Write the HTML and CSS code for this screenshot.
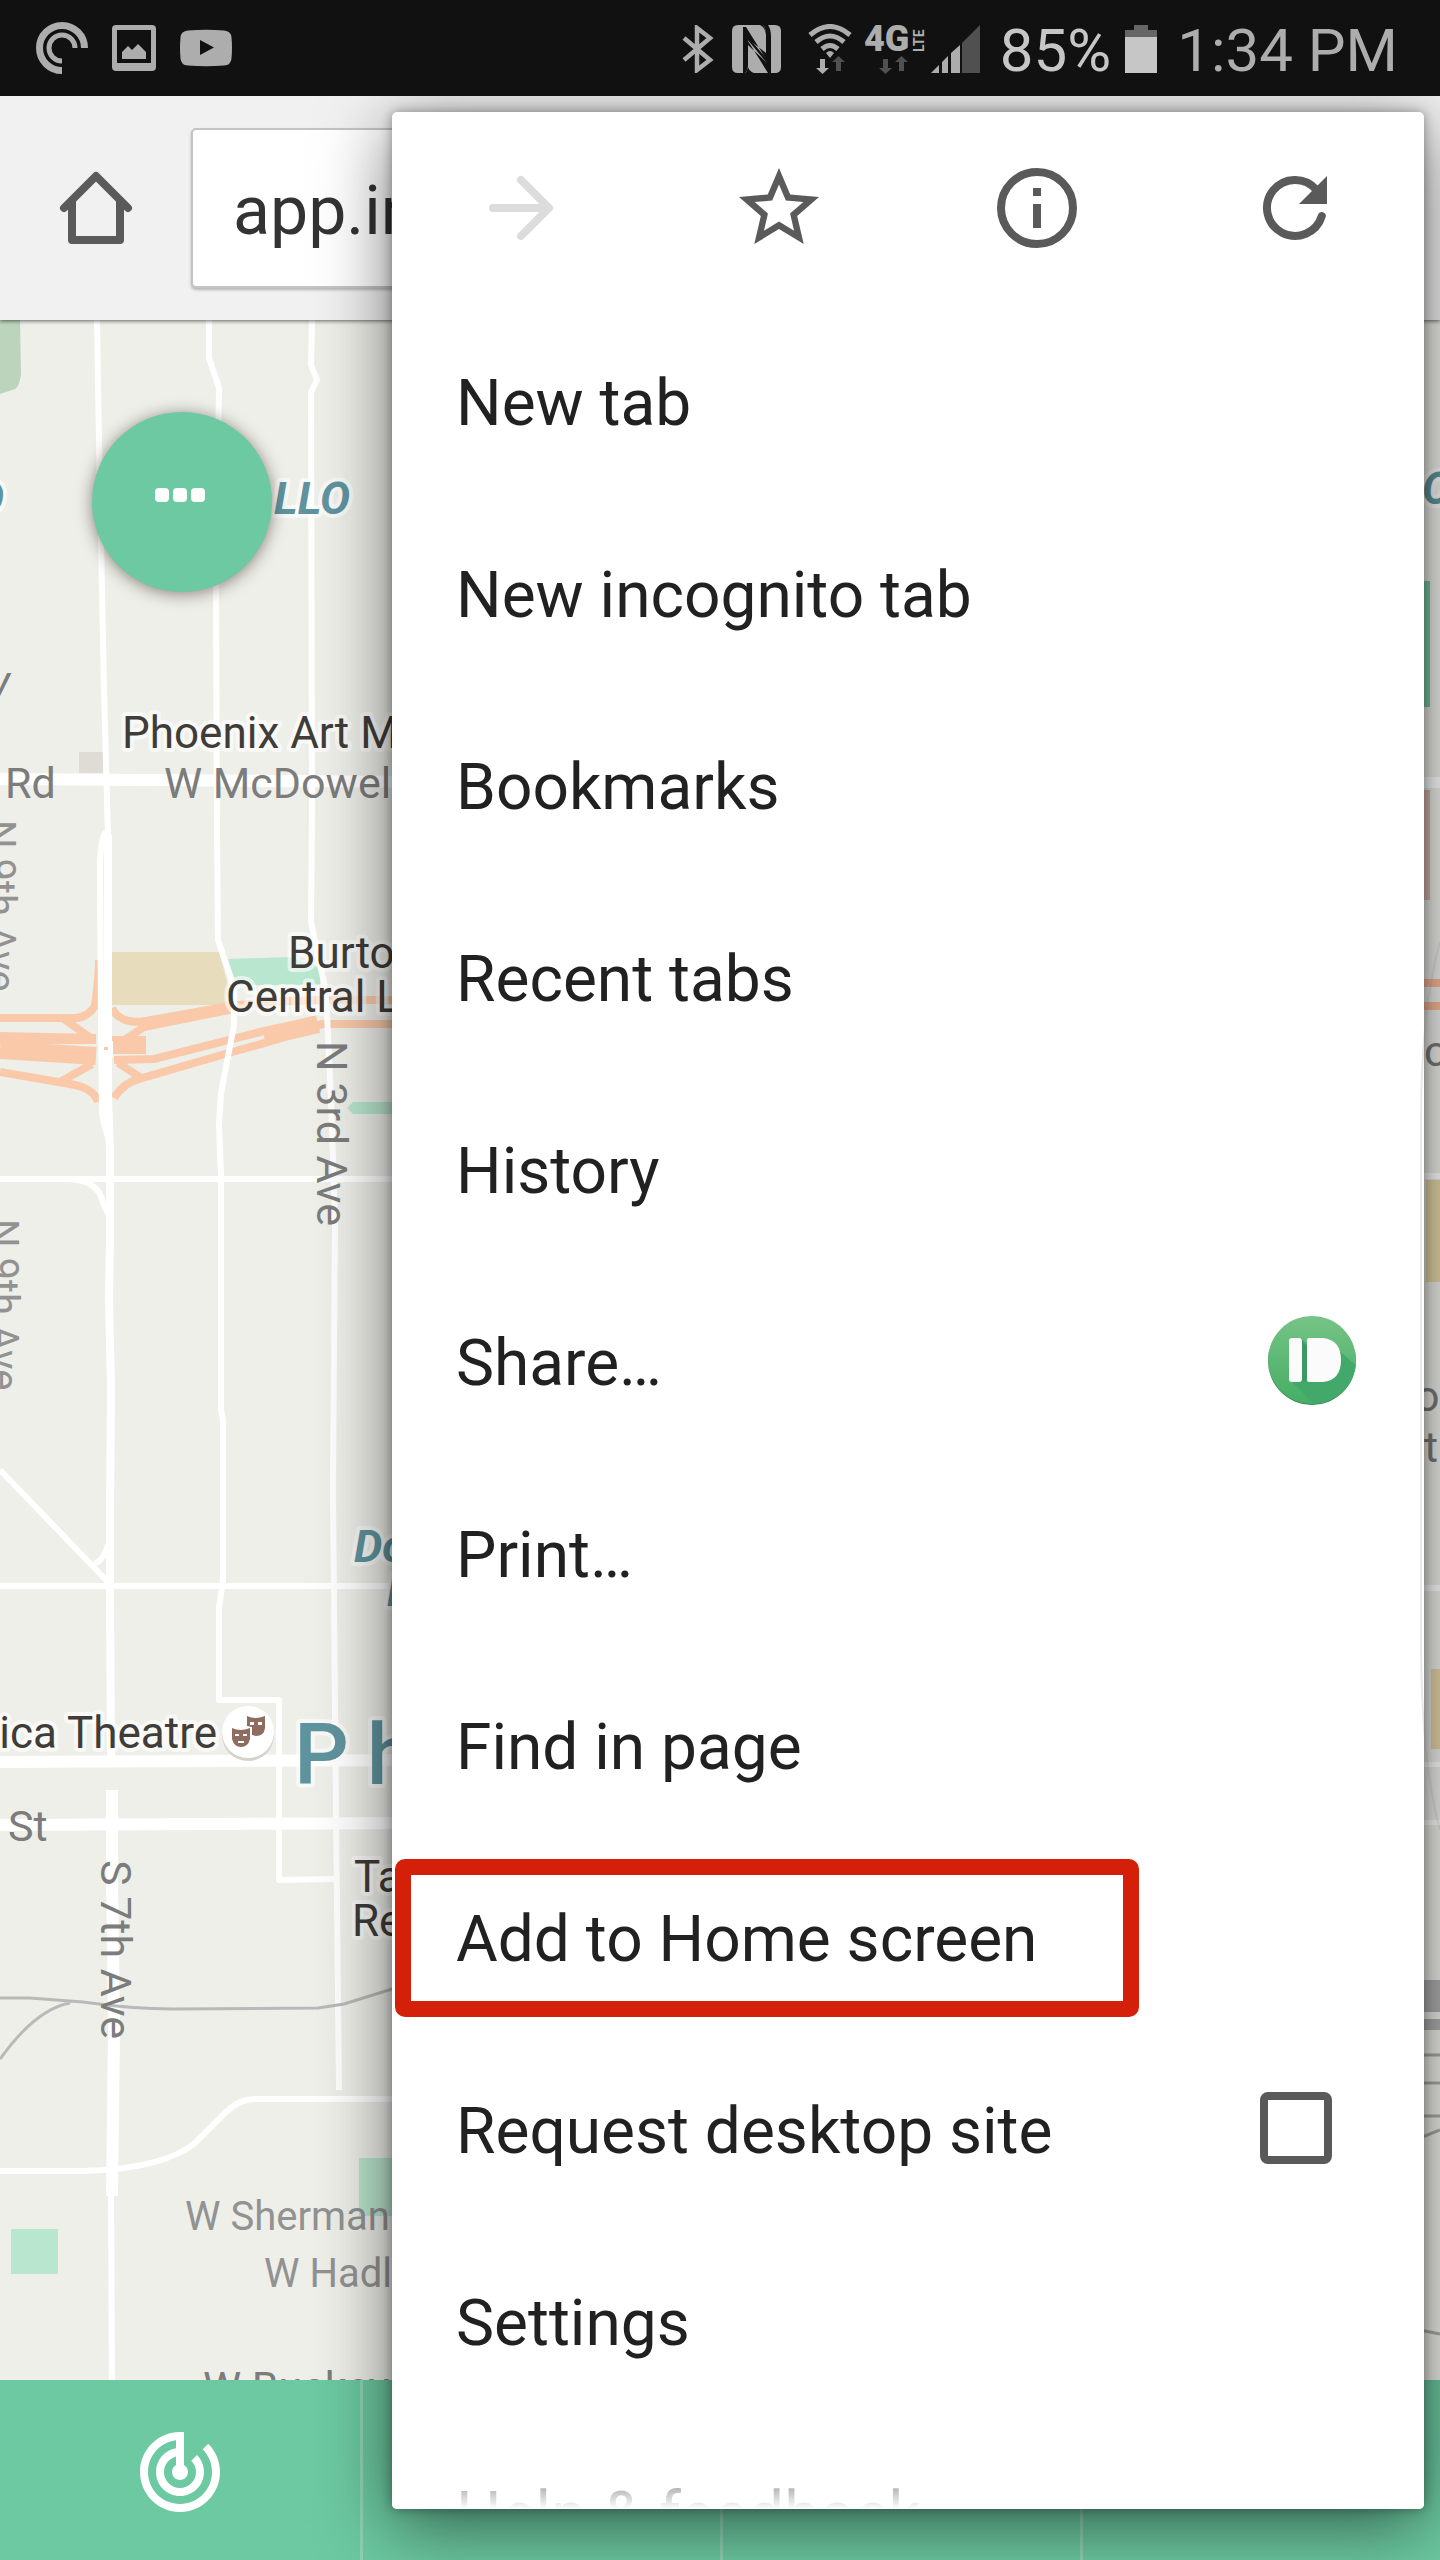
FILE: index.html
```html
<!DOCTYPE html>
<html lang="en">
<head>
<meta charset="utf-8">
<meta name="viewport" content="width=device-width, initial-scale=1">
<title>Map</title>
<link rel="stylesheet" href="styles.css">
</head>
<body>
<div class="screen">
  <header class="status">
    <div class="status-group status-left">
      <svg width="52" height="52" viewBox="0 0 52 52" fill="none" stroke="#adadad" aria-hidden="true"><path stroke-width="7" d="M48.500 26A22.500 22.500 0 1 0 26 48.500"/><path stroke-width="5" d="M39 26A13 13 0 1 0 26 39"/></svg>
      <svg width="44" height="52" viewBox="0 0 44 52" fill="#adadad" aria-hidden="true"><path fill-rule="evenodd" d="M4 3h36q4 0 4 4v38q0 4-4 4H4q-4 0-4-4V7q0-4 4-4zM5 8v33h34V8z"/><path d="M10 37v-7l6-6 4 4 6-6 8 8v7z"/></svg>
      <svg width="52" height="52" viewBox="0 0 52 52" aria-hidden="true"><path fill="#adadad" d="M8 8.500Q26 7 44 8.500q7 .5 7.500 7 1 10.500 0 21-.5 6.500-7.500 7-18 1.500-36 0-7-.5-7.500-7-1-10.500 0-21Q1 9 8 8.500z"/><path fill="#111" d="M20 18l14 7.500L20 33z"/></svg>
    </div>
    <div class="status-group status-right">
      <svg width="32" height="48" viewBox="0 0 32 48" fill="none" stroke="#adadad" stroke-width="4.500" aria-hidden="true"><path d="M2 13l26 22-13 10V3l13 10L2 35"/></svg>
      <svg class="nfc" width="49" height="48" viewBox="0 0 49 48" fill="#adadad" aria-hidden="true"><path d="M6 0h22q5 2 6 10v23L16 12v28q0 6-3 8H6q-6 0-6-6V6q0-6 6-6zM43 48H22q-6-2-7-10V14l19 23V10q0-6-3-10h12q6 0 6 6v36q0 6-6 6z"/><path fill="#111" d="M11 2l3 0 20 32v-6L16 14v26q0 5-3 8h-2zM36 0q3 4 3 12v36h-3l-20-32v4l18 17V10q0-7-3-10z"/></svg>
      <svg class="wifi" width="44" height="50" viewBox="0 0 44 50" aria-hidden="true"><g fill="none" stroke="#adadad" stroke-width="5"><path d="M2 11q20-17 40 0M8 18q14-12 28 0M14 25q8-7 16 0"/></g><path fill="#adadad" d="M18 29q4-4 8 0l-4 5z"/><path fill="#adadad" d="M12 35h5v9h4l-6.500 6L8 44h4z"/><path fill="#505050" d="M28 47h5v-9h4l-6.500-6-6.500 6h4z"/></svg>
      <svg width="62" height="50" viewBox="0 0 62 50" aria-hidden="true"><text class="net" x="0" y="27">4G</text><text class="lte" transform="translate(60 28) rotate(-90)">LTE</text><path fill="#505050" d="M19 35h5v9h4l-6.500 6-6.500-6h4zM35 47h5v-9h4l-6.500-6-6.500 6h4z"/></svg>
      <svg class="signal" width="49" height="48" viewBox="0 0 49 48" aria-hidden="true"><path fill="#adadad" d="M0 48l8-8v8zM11 48V37l6-6v17zM20 48V28l9-8v28z"/><path fill="#505050" d="M31 48V18L49 0v48z"/></svg>
      <span class="pct">85%</span>
      <svg class="battery" width="32" height="48" viewBox="0 0 32 48" aria-hidden="true"><path fill="#666" d="M9 0h14v5h9v7H0V5h9z"/><path fill="#c6c6c6" d="M0 12h32v36H0z"/></svg>
      <time>1:34 PM</time>
    </div>
  </header>

  <div class="toolbar">
    <button class="home" aria-label="Home"><svg width="96" height="96" viewBox="0 0 24 24" fill="none" stroke="#5a5a5a" stroke-width="2" stroke-linecap="round" stroke-linejoin="round"><path d="M4 12l8-8 8 8"/><path d="M6 10.500V20h12v-9.500"/></svg></button>
    <input class="omnibox" type="text" value="app.in" aria-label="Address">
  </div>

  <main class="map">
    <svg class="map-art" viewBox="0 320 1440 2060" preserveAspectRatio="xMinYMin slice" role="img" aria-label="Map of Phoenix">
      <path fill="#bcd4bc" d="M0 320h20l1 55q-2 12-6 14l-15 5z"/>
      <path fill="#dfdbd5" d="M79 752h24v21H79z"/>
      <path fill="#e7ddbc" d="M112 952h107l12 45-6 8H112z"/>
      <path fill="#b9e6ce" d="M228 959l60-2 32 10v18h-86zM347 1108l6-6h60v12h-60zM11 2229h47v45H11zM359 2158h60v58h-60z"/>
      <g fill="none" stroke="#f9c9aa" stroke-width="8">
        <path d="M0 1018h75q12 0 20-12 4-30 4-46M0 1072l70 12q24 4 28 18M64 1019l28 20M60 1082l32-18M114 1098q10-16 28-20l90-26q60-16 90-28h118M112 1008q6 14 28 14l90-16q80-10 210-4M120 1043l24-16 90-18M118 1063l22 14M114 1060l40-1 110-28"/>
        <path d="M0 1036l96 2M0 1040h96"/>
        <path stroke-width="18" d="M0 1050l96 6M110 1045h36M264 1036q30-6 54-12"/>
      </g>
      <g fill="none" stroke="#fff" stroke-width="6" stroke-linejoin="round">
        <path d="M97 320l2 120 5 250 4 145M106 832q-6 6-6 40l1 150 1 90q1 12 8 30"/>
        <path stroke-width="8" d="M108 835v265l2 50v90l-1 60 2 90-1 120v90l1 160"/>
        <path d="M209 320v38l10 30-3 202 1 240 1 110 16 47v38l-13 68-2 32 2 50v235l2 10v160l-4 28v92h60v180l55-1"/>
        <path d="M312 320l-1 45 6 15-6 12 1 420-1 110 15 70 5 108 4 120-2 270 2 220 1 100 3 280"/>
        <path d="M0 1179h440M65 1179q34 0 38 24l6 12M0 1470l108 112M94 1563q8 0 14-18M0 1586h440"/>
        <path stroke-width="12" d="M0 779l440 3M0 1762l440-2M0 1825l440-2M112 1790v90l2 150-2 166"/>
        <path d="M111 2190l1 200M0 2171h83q80-2 112-28l30-30q14-14 30-14h200"/>
      </g>
      <path fill="#fff" d="M99 1041h14v16H99z"/><path fill="#f9c9aa" d="M104 1047h4v3h-4z"/>
      <g fill="none" stroke="#b9b9b9" stroke-width="3"><path d="M0 1998h30l53 4q50 7 90 7l145-1 26-4 48-15h40M0 2059q36-50 70-56"/></g>

      <g>
        <path fill="#7fcba8" d="M1420 581h10v126h-10z"/><path fill="#dcb9b4" d="M1420 790h10v110h-10z"/>
        <path fill="#e5d6a8" d="M1426 1180h14v102h-14zM1431 1669h9v80h-9z"/>
        <path fill="#f9b998" d="M1420 979h20v8h-20zM1420 1002h20v8h-20z"/>
        <path fill="#fff" d="M1420 777h20v11h-20zM1420 1173h20v6h-20zM1420 1585h20v6h-20zM1420 1762h20v5h-20zM1420 1820h20v5h-20z"/>
        <path fill="#b0b0b0" d="M1420 1980h20v32h-20zM1420 2019h20v11h-20z"/>
        <path fill="none" stroke="#aaa" stroke-width="3" d="M1420 2055h20M1420 2083h20M1420 2116h20M1420 2138l20-8M1420 2330l20 4"/>
      </g>

      <g class="road-label">
        <text x="5" y="798">Rd</text><text x="164" y="798">W McDowell Rd</text><text x="8" y="1841">St</text><text x="203" y="2402">W Buckeye Rd</text>
        <text transform="translate(317 1041) rotate(90)">N 3rd Ave</text><text transform="translate(101 1860) rotate(90)">S 7th Ave</text>
        <text x="10" y="696" text-anchor="end" font-style="italic">y</text>
        <text x="1424" y="1066">c</text><text x="1424" y="1462">t</text><text x="1415" y="1411">or</text>
      </g>
      <g class="road-label minor">
        <text x="185" y="2230">W Sherman St</text><text x="264" y="2287">W Hadley St</text>
        <text transform="translate(-13 820) rotate(90)">N 9th Ave</text><text transform="translate(-10 1219) rotate(90)">N 9th Ave</text>
      </g>
      <g class="place-label">
        <text x="122" y="748">Phoenix Art Museum</text><text x="288" y="968">Burton Barr</text><text x="226" y="1012">Central Library</text>
        <text x="217" y="1748" text-anchor="end">ica Theatre</text><text x="354" y="1892">Talking</text><text x="352" y="1936">Resource</text>
      </g>
      <g class="area-label">
        <text x="350" y="514" text-anchor="end">LLO</text><text x="4" y="514" text-anchor="end">O</text><text x="1422" y="504">O</text>
        <text x="354" y="1562">Downtown</text><text x="387" y="1606">Phoenix</text>
      </g>
      <text class="city-label" y="1784"><tspan x="294">P</tspan><tspan x="367">h</tspan></text>
      <circle cx="248" cy="1735" r="26" fill="#d5d2ca"/><circle cx="248" cy="1732" r="26" fill="#fff"/>
      <path fill="#8f6c60" d="M247 1716q8 4 18 0v12q-1 8-9 8l-4-1v-8l-5-1zM232 1728q8 4 18 0v11q-2 8-9 8t-9-8z"/>
      <path fill="#fff" d="M250 1722h4v3h-4zM258 1722h4v3h-4zM235 1734h4v2h-4zM243 1734h4v2h-4zM238 1741h6v2h-6z"/>
    </svg>
    <button class="fab" aria-label="More"><i></i><i></i><i></i></button>
  </main>

  <nav class="tabs">
    <button class="tab" aria-label="Nearby"><svg width="96" height="96" viewBox="0 0 24 24" fill="#fff"><path d="M19.070 4.930l-1.410 1.410C19.100 7.790 20 9.790 20 12c0 4.420-3.580 8-8 8s-8-3.580-8-8c0-4.080 3.050-7.440 7-7.930v2.020C8.160 6.570 6 9.030 6 12c0 3.310 2.690 6 6 6s6-2.690 6-6c0-1.660-.67-3.160-1.760-4.240l-1.410 1.410C15.550 9.900 16 10.900 16 12c0 2.210-1.790 4-4 4s-4-1.790-4-4c0-1.860 1.280-3.410 3-3.860v2.140c-.6.35-1 .98-1 1.720 0 1.100.9 2 2 2s2-.9 2-2c0-.74-.4-1.380-1-1.720V2h-1C6.480 2 2 6.480 2 12s4.480 10 10 10 10-4.480 10-10c0-2.760-1.120-5.260-2.930-7.070z"/></svg></button>
    <button class="tab" aria-label="Second tab"></button>
    <button class="tab" aria-label="Third tab"></button>
    <button class="tab" aria-label="Fourth tab"></button>
  </nav>

  <div class="menu">
    <div class="menu-scroll">
      <div class="menu-icons">
        <button aria-label="Forward" disabled><svg width="96" height="96" viewBox="0 0 24 24" fill="none" stroke="#dcdcdc" stroke-width="2" stroke-linecap="round" stroke-linejoin="round"><path d="M5 12h14M12 5l7 7-7 7"/></svg></button>
        <button aria-label="Bookmark"><svg width="96" height="96" viewBox="0 0 24 24" fill="#5a5a5a"><path d="M22 9.240l-7.190-.62L12 2 9.190 8.630 2 9.240l5.460 4.730L5.820 21 12 17.270 18.180 21l-1.630-7.030zM12 15.400l-3.760 2.270 1-4.280-3.320-2.880 4.380-.38L12 6.100l1.710 4.040 4.380.38-3.320 2.880 1 4.280z"/></svg></button>
        <button aria-label="Page info"><svg width="96" height="96" viewBox="0 0 24 24"><circle cx="12" cy="12" r="9" fill="none" stroke="#5a5a5a" stroke-width="2"/><path fill="#5a5a5a" d="M11 7h2v2h-2zM11 11h2v6h-2z"/></svg></button>
        <button aria-label="Reload"><svg width="96" height="96" viewBox="0 0 24 24"><path d="M17.300 7.400A7 7 0 1 0 18.700 14" fill="none" stroke="#5a5a5a" stroke-width="2" stroke-linecap="round"/><path fill="#5a5a5a" d="M20 4v7h-7z"/></svg></button>
      </div>
      <button class="item"><span>New tab</span></button>
      <button class="item"><span>New incognito tab</span></button>
      <button class="item"><span>Bookmarks</span></button>
      <button class="item"><span>Recent tabs</span></button>
      <button class="item"><span>History</span></button>
      <button class="item item-share"><span>Share…</span>
        <svg width="88" height="92" viewBox="0 0 88 92" aria-hidden="true">
          <defs><linearGradient id="pb" x1="0" y1="0" x2="0" y2="1"><stop offset="0" stop-color="#76c385"/><stop offset="1" stop-color="#45ae65"/></linearGradient><clipPath id="pbc"><circle cx="44" cy="46" r="44"/></clipPath></defs>
          <circle cx="44" cy="47" r="44" fill="#3b8458"/><circle cx="44" cy="46" r="44" fill="url(#pb)"/>
          <g clip-path="url(#pbc)"><path fill="#43a96b" d="M33 24l8 8v-8h15l40 34v34H48L22 66z"/></g>
          <path fill="#3d9868" d="M33 27l6 5v35h-6z"/>
          <rect x="21" y="24" width="13" height="44" rx="3" fill="#fbfbfb"/><path fill="#fbfbfb" d="M41 24h14q18 2 18 22T55 68H41q-2 0-2-2V26q0-2 2-2z"/>
        </svg>
      </button>
      <button class="item"><span>Print…</span></button>
      <button class="item"><span>Find in page</span></button>
      <button class="item item-marked"><span>Add to Home screen</span></button>
      <label class="item item-check"><span>Request desktop site</span><input type="checkbox"></label>
      <button class="item"><span>Settings</span></button>
      <button class="item"><span>Help &amp; feedback</span></button>
    </div>
  </div>
  <svg class="edge-handle" width="20" height="900" viewBox="0 0 20 900" fill="none" stroke="#808090" stroke-opacity=".18" stroke-width="2" aria-hidden="true"><path d="M20 2Q1 70 1 180v520q0 120 19 190"/></svg>
</div>
</body>
</html>
```
FILE: styles.css
```css
*, *::before, *::after { box-sizing: border-box; }
body { margin: 0; font-family: Roboto, "Noto Sans", sans-serif; }
button { margin: 0; padding: 0; border: 0; background: none; font: inherit; color: inherit; }
svg { display: block; flex: none; }

.screen { position: relative; display: flex; flex-direction: column; min-height: 100vh; overflow: hidden; background: #eeefe9; }

/* status bar */
.status { position: relative; z-index: 3; display: flex; justify-content: space-between; height: 96px; padding: 0 42px 0 36px; background: #111; color: #c6c6c6; font-size: 60px; line-height: 72px; }
.status-group { display: flex; align-items: center; }
.status-left { gap: 24px; }
.status-right { color: #adadad; padding-top: 2px; }
.pct { margin: 4px 14px 0 20px; color: #c6c6c6; }
.status time { margin: 4px 0 0 20px; }
.nfc { margin-left: 18px; }
.wifi { margin: 0 12px 0 27px; }
.signal { margin-left: 5px; }
.net { font: 900 36px Roboto, sans-serif; fill: #adadad; }
.lte { font: 700 14px Roboto, sans-serif; fill: #adadad; }

/* browser toolbar */
.toolbar { position: relative; z-index: 1; display: flex; align-items: flex-start; height: 224px; padding: 32px 144px 0 0; background: #f1f1f1; box-shadow: 0 1px 4px rgba(0, 0, 0, .6); }
.home { padding: 32px 47px 32px 48px; }
.omnibox { flex: 1; min-width: 0; height: 160px; padding: 6px 40px 0; border: 2px solid #c4c4c4; border-radius: 5px; background: #fff; box-shadow: 0 2px 3px rgba(0, 0, 0, .25); color: #333; font: 68px Roboto, sans-serif; }

/* map */
.map { position: relative; flex: 1; overflow: hidden; }
.map-art { position: absolute; inset: 0; width: 100%; height: 100%; }
.map text { font-family: Roboto, sans-serif; paint-order: stroke; stroke: rgba(255, 255, 255, .6); stroke-width: 8px; stroke-linejoin: round; }
.map .road-label text { font-size: 43px; fill: #7c7c7c; stroke: none; }
.map .minor text { font-size: 40px; fill: #929292; }
.map .place-label text { font-size: 44px; fill: #403c38; }
.map .area-label text { font-size: 45px; font-style: italic; font-weight: 700; fill: #5f949e; }
.map .city-label { font-size: 86px; font-weight: 500; fill: #5f949e; }
.fab { position: absolute; top: 92px; left: 92px; display: flex; align-items: center; justify-content: center; gap: 4px; width: 180px; height: 180px; padding: 0 4px 14px 0; border-radius: 50%; background: #6cc9a1; box-shadow: 0 2px 16px rgba(40, 20, 20, .5); }
.fab i { width: 14px; height: 14px; border-radius: 4px; background: #fff; }

/* bottom tabs */
.tabs { display: grid; grid-template-columns: repeat(4, 1fr); height: 180px; background: #6cc9a1; }
.tab { display: flex; align-items: center; justify-content: center; padding-top: 4px; }
.tab + .tab { border-left: 3px solid #8ed2b5; }

/* overflow menu */
.menu { position: absolute; z-index: 2; top: 112px; right: 16px; bottom: 51px; left: 392px; border-radius: 5px; background: #fff; box-shadow: 0 0 12px rgba(0, 0, 0, .35), 0 16px 72px rgba(0, 0, 0, .55); }
.menu-scroll { position: relative; height: 100%; overflow: hidden; border-radius: 5px; }
.menu-scroll::after { content: ""; position: absolute; right: 0; bottom: 0; left: 0; height: 64px; background: linear-gradient(rgba(255, 255, 255, 0), #fff); }
.menu-icons { display: grid; grid-template-columns: repeat(4, 1fr); place-items: center; height: 192px; }
.item { position: relative; display: flex; align-items: center; justify-content: space-between; width: 100%; height: 192px; padding: 0 92px 0 64px; color: #212121; font-size: 64px; line-height: 76px; text-align: left; white-space: nowrap; }
.item span { padding-top: 8px; }
.item-share { padding-right: 68px; }
.item-marked::after { content: ""; position: absolute; top: 19px; bottom: 15px; left: 3px; width: 744px; border: 16px solid #d42008; border-radius: 10px; }
.item-check input { width: 72px; height: 72px; margin: 0; appearance: none; border: 8px solid #5a5a5a; border-radius: 8px; background: #fff; }

.edge-handle { position: absolute; z-index: 4; top: 940px; right: 0; }
```
